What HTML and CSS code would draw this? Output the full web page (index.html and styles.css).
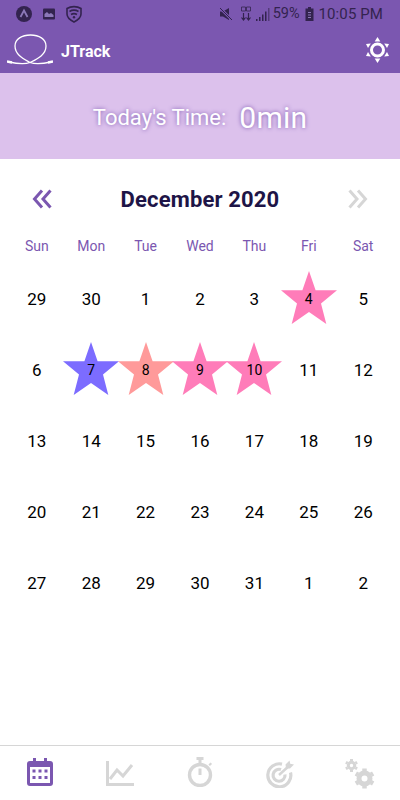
FILE: index.html
```html
<!DOCTYPE html>
<html lang="en">
<head>
<meta charset="utf-8">
<title>JTrack</title>
<link rel="stylesheet" href="styles.css">
</head>
<body>
<svg class="defs" width="0" height="0" aria-hidden="true"><defs>
<polygon id="star" points="28,0 34.6,19.3 56,19.3 40,32.6 45.3,53 28,41 10.7,53 16,32.6 0,19.3 21.4,19.3"/>
</defs></svg>
<div class="app">
  <header class="top">
    <div class="status">
      <div class="status-left">
        <svg width="18" height="18" viewBox="0 0 18 18"><circle cx="9" cy="9" r="8" fill="#33234f"/><path d="M5.500 12 9 5.500 12.500 12" fill="none" stroke="#8c78b8" stroke-width="1.800"/></svg>
        <svg width="14" height="14" viewBox="0 0 14 14"><rect x="1" y="1.500" width="12" height="11" rx="1" fill="#33234f"/><path d="M2.500 10V7l2.500-2 2 2 2-1 2.500 2v2z" fill="#8c78b8"/></svg>
        <svg width="18" height="18" viewBox="0 0 18 18"><path d="M2 3.500C6 1 12 1 16 3.500V9c0 3-3 6-7 8-4-2-7-5-7-8z" fill="none" stroke="#33234f" stroke-width="1.600"/><path d="M4.500 6.500c3-1.800 6-1.800 9 0M6 9.500c2-1.200 4-1.200 6 0" fill="none" stroke="#33234f" stroke-width="1.600"/><circle cx="9" cy="12.200" r="1.200" fill="#33234f"/></svg>
      </div>
      <div class="status-right">
        <svg class="mute" width="14" height="14" viewBox="0 0 14 14"><path d="M1 4.500h3L10 1v12L4 9.500H1z" fill="#33234f"/><path d="M1 1l12 12" stroke="#7b57b0" stroke-width="2.500"/><path d="M1 1l12 12" stroke="#33234f" stroke-width="1"/></svg>
        <svg class="data" width="10" height="15" viewBox="0 0 10 15"><path d="M2.500 14V7M.5 11.500l2 2.500 2-2.500M7.500 14V7M5.500 11.500l2 2.500 2-2.500" fill="none" stroke="#33234f" stroke-width="1.200"/><path d="M.5 1h4v4h-4zM5.500 1h4v4h-4z" fill="none" stroke="#33234f" stroke-width=".8"/></svg>
        <svg class="signal" width="14" height="14" viewBox="0 0 14 14"><path d="M0 12h1.500v2H0zM3 10h1.500v4H3zM6 7.500h1.500V14H6zM9 4.500h1.500V14H9z" fill="#33234f"/><path d="M12 1h1.500v13H12z" fill="#33234f" opacity=".55"/></svg>
        <span class="pct">59%</span>
        <svg class="batt" width="9" height="14" viewBox="0 0 9 14"><path d="M3 0h3v1.500h2.500V14H.5V1.500H3z" fill="#33234f"/><path d="M3 5.500h3M3 8h3M3 10.500h3" stroke="#8c78b8" stroke-width="1"/></svg>
        <span class="clock">10:05 PM</span>
      </div>
    </div>
    <div class="bar">
      <div class="brand">
        <svg class="logo" width="46" height="32" viewBox="0 0 46 32"><path d="M2 28C9 29.500 16 31 23 28.500 30 25 39 21 39 12 39 5 32 1 23.500 1 15 1 8 5 8 12 8 21 17 25 23 28.500 30 31 37 29.500 44 28" fill="none" stroke="#fff" stroke-width="1.300"/><path d="M0 27.500l5 1M46 27.500l-5 1" stroke="#fff" stroke-width="2.500"/></svg>
        <span class="name">JTrack</span>
      </div>
      <svg class="gear" width="26" height="28" viewBox="0 0 26 28"><circle cx="12.500" cy="14" r="6" fill="none" stroke="#fff" stroke-width="3"/><g fill="#fff"><path d="M12.500 1l2.800 4.500h-5.600z"/><path d="M12.500 27l2.800-4.500h-5.600z"/><path d="M1 8l4.800-.6L3 12z"/><path d="M24 8l-4.800-.6L22 12z"/><path d="M1 20l4.800.6L3 16z"/><path d="M24 20l-4.800.6L22 16z"/></g></svg>
    </div>
  </header>
  <section class="banner">
    <span class="today">Today's Time:</span>
    <span class="mins">0min</span>
  </section>
  <main class="calendar">
    <div class="month">
      <svg class="chev" width="20" height="20" viewBox="0 0 20 20"><path d="M10 1.500 2.500 10l7.500 8.500M18.500 1.500 11 10l7.500 8.500" fill="none" stroke="#7b57b0" stroke-width="3"/></svg>
      <h1 class="title">December 2020</h1>
      <svg class="chev" width="20" height="20" viewBox="0 0 20 20"><path d="M10 1.500 17.500 10 10 18.500M1.500 1.500 9 10l-7.500 8.500" fill="none" stroke="#d6d6d6" stroke-width="3"/></svg>
    </div>
    <div class="weekdays">
      <span>Sun</span><span>Mon</span><span>Tue</span><span>Wed</span><span>Thu</span><span>Fri</span><span>Sat</span>
    </div>
    <div class="days">
      <div class="day">29</div><div class="day">30</div><div class="day">1</div><div class="day">2</div><div class="day">3</div>
      <div class="day"><svg class="star pink" viewBox="0 0 56 53"><use href="#star"/></svg><span class="num">4</span></div>
      <div class="day">5</div>
      <div class="day">6</div>
      <div class="day"><svg class="star blue" viewBox="0 0 56 53"><use href="#star"/></svg><span class="num">7</span></div>
      <div class="day"><svg class="star salmon" viewBox="0 0 56 53"><use href="#star"/></svg><span class="num">8</span></div>
      <div class="day"><svg class="star pink" viewBox="0 0 56 53"><use href="#star"/></svg><span class="num">9</span></div>
      <div class="day"><svg class="star pink" viewBox="0 0 56 53"><use href="#star"/></svg><span class="num">10</span></div>
      <div class="day">11</div><div class="day">12</div>
      <div class="day">13</div><div class="day">14</div><div class="day">15</div><div class="day">16</div><div class="day">17</div><div class="day">18</div><div class="day">19</div>
      <div class="day">20</div><div class="day">21</div><div class="day">22</div><div class="day">23</div><div class="day">24</div><div class="day">25</div><div class="day">26</div>
      <div class="day">27</div><div class="day">28</div><div class="day">29</div><div class="day">30</div><div class="day">31</div><div class="day">1</div><div class="day">2</div>
    </div>
  </main>
  <nav class="tabs">
    <svg width="26" height="28" viewBox="0 0 26 28"><path d="M6 0h3v3h8V0h3v3h3a3 3 0 0 1 3 3v19a3 3 0 0 1-3 3H3a3 3 0 0 1-3-3V6a3 3 0 0 1 3-3h3z" fill="#7b57b0"/><rect x="3" y="9" width="20" height="16" fill="#fff"/><g fill="#7b57b0"><rect x="5.500" y="11.500" width="3" height="3"/><rect x="11.500" y="11.500" width="3" height="3"/><rect x="17.500" y="11.500" width="3" height="3"/><rect x="5.500" y="18" width="3" height="3"/><rect x="11.500" y="18" width="3" height="3"/><rect x="17.500" y="18" width="3" height="3"/></g></svg>
    <svg class="low" width="28" height="25" viewBox="0 0 28 25"><path d="M1.500 0v23.500H28" fill="none" stroke="#d6d6d6" stroke-width="3"/><path d="M4 18l7-9 6 6 9-11" fill="none" stroke="#d6d6d6" stroke-width="3"/></svg>
    <svg width="26" height="30" viewBox="0 0 26 30"><circle cx="13" cy="18" r="10.500" fill="none" stroke="#d6d6d6" stroke-width="3.400"/><path d="M9.500 1.500h7M13 3v3M13 11.500V18M22.500 6.500l1.500 1.500" fill="none" stroke="#d6d6d6" stroke-width="3"/></svg>
    <svg class="low" width="28" height="28" viewBox="0 0 28 28"><path d="M16 4.100A11.500 11.500 0 1 0 24.500 12.500" fill="none" stroke="#d6d6d6" stroke-width="3.200"/><path d="M15 9.600A6 6 0 1 0 19 14.500" fill="none" stroke="#d6d6d6" stroke-width="3.200"/><path d="M13 15 24 5" stroke="#d6d6d6" stroke-width="2.500"/><path d="M19.500 4.500l4-4 .7 3.300L28 4.500l-4 4h-4z" fill="#d6d6d6"/></svg>
    <svg class="low" width="30" height="30" viewBox="0 0 30 30"><g fill="none" stroke="#d6d6d6"><circle cx="6.500" cy="6.500" r="3.200" stroke-width="3"/><g stroke-width="3" stroke-dasharray="2 9 2"><path d="M6.500 0v13"/><path d="M.87 3.250 12.130 9.750"/><path d="M.87 9.750 12.130 3.250"/></g><circle cx="19.500" cy="19.500" r="5.500" stroke-width="5"/><g stroke-width="4.500" stroke-dasharray="2.500 15 2.500"><path d="M19.500 9.500v20"/><path d="M10.840 14.500 28.160 24.500"/><path d="M10.840 24.500 28.160 14.500"/></g></g></svg>
  </nav>
</div>
</body>
</html>
```
FILE: styles.css
```css
* { box-sizing: border-box; }
html, body { margin: 0; padding: 0; }
body { font-family: Roboto, "Liberation Sans", sans-serif; background: #fff; }
.defs { position: absolute; }
.app { width: 400px; height: 800px; display: flex; flex-direction: column; overflow: hidden; }

.top { height: 73px; background: #7b57b0; }
.status { height: 26px; display: flex; justify-content: space-between; align-items: center; padding: 1px 17px 0 15px; color: #33234f; }
.status-left { display: flex; align-items: center; gap: 9px; }
.status-right { display: flex; align-items: center; }
.mute { margin-right: 8px; }
.data { margin-right: 5px; }
.signal { margin-right: 3px; }
.batt { margin: 0 5px; }
.pct { font-size: 14.500px; }
.clock { font-size: 15px; letter-spacing: .1px; }
.bar { height: 47px; display: flex; justify-content: space-between; align-items: center; padding: 0 9px 0 7px; }
.brand { display: flex; align-items: center; gap: 8px; }
.name { color: #fff; font-size: 16px; font-weight: 700; padding-top: 3px; }
.logo { display: block; }
.gear { display: block; }

.banner { height: 86px; background: #dcc1ec; display: flex; justify-content: center; align-items: center; gap: 13px; padding-top: 3px; color: #fff; text-shadow: 0 0 4px #7b57b0; }
.today { font-size: 22px; }
.mins { font-size: 30px; letter-spacing: .2px; }

.calendar { flex: 1; padding: 0 9.600px; }
.month { display: flex; align-items: center; justify-content: space-between; height: 80px; padding: 0 22px; }
.title { margin: 0; font-size: 22px; font-weight: 700; color: #1e1547; letter-spacing: .15px; }
.chev { display: block; }
.weekdays { display: grid; grid-template-columns: repeat(7, 1fr); height: 14px; line-height: 14px; text-align: center; font-size: 14px; color: #7b57b0; }
.days { display: grid; grid-template-columns: repeat(7, 1fr); grid-auto-rows: 71px; margin-top: 10px; }
.day { position: relative; display: flex; align-items: center; justify-content: center; font-size: 17px; color: #000; }
.star { position: absolute; left: 50%; top: 50%; width: 56px; height: 53px; margin: -28px 0 0 -28px; }
.num { position: relative; font-size: 14px; }
.pink { fill: #ff7cb9; }
.blue { fill: #7c6cff; }
.salmon { fill: #ff9a9a; }

.tabs { height: 55px; border-top: 1px solid #d6d6d6; display: grid; grid-template-columns: repeat(5, 1fr); justify-items: center; align-items: center; padding-bottom: 2px; }
.low { margin-top: 3px; }
```
